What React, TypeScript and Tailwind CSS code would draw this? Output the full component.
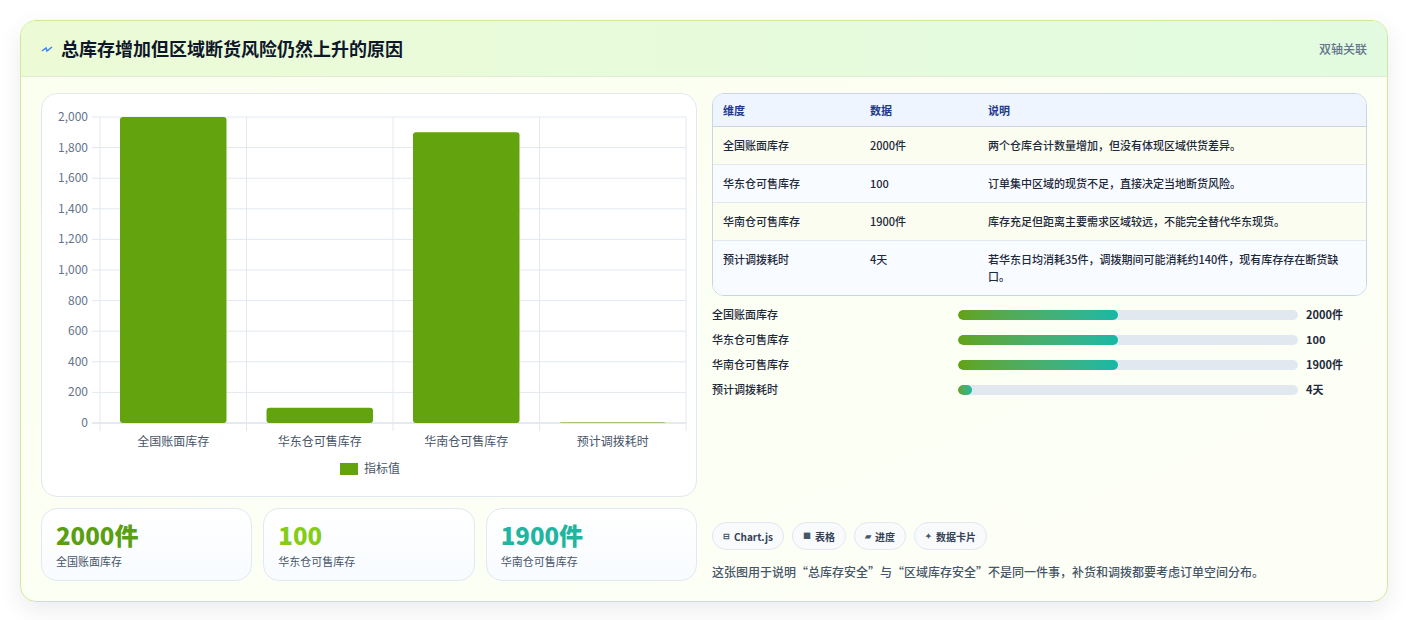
const font = { fontFamily: '"Noto Sans CJK SC", "Noto Sans", sans-serif' }

const cats = ["全国账面库存", "华东仓可售库存", "华南仓可售库存", "预计调拨耗时"]
const vals = [2000, 100, 1900, 4]

const rows = [
  ["全国账面库存", "2000件", "两个仓库合计数量增加，但没有体现区域供货差异。"],
  ["华东仓可售库存", "100", "订单集中区域的现货不足，直接决定当地断货风险。"],
  ["华南仓可售库存", "1900件", "库存充足但距离主要需求区域较远，不能完全替代华东现货。"],
  ["预计调拨耗时", "4天", "若华东日均消耗35件，调拨期间可能消耗约140件，现有库存存在断货缺口。"],
]

const bars = [
  ["全国账面库存", 47, "2000件"],
  ["华东仓可售库存", 47, "100"],
  ["华南仓可售库存", 47, "1900件"],
  ["预计调拨耗时", 4, "4天"],
] as const

function Chart() {
  const L = 58, R = 644, T = 23, B = 329
  const cw = (R - L) / 4
  const y = (v: number) => B - (v / 2000) * (B - T)
  return (
    <svg width="656" height="404" className="block">
      {[0, 200, 400, 600, 800, 1000, 1200, 1400, 1600, 1800, 2000].map((t) => (
        <g key={t}>
          <line x1={L - 8} x2={R} y1={y(t)} y2={y(t)} stroke={t === 0 ? "#cbd5e1" : "#e2e8f0"} />
          <text x={L - 12} y={y(t) + 4} textAnchor="end" fontSize="12" fill="#64748b">
            {t.toLocaleString("en-US")}
          </text>
        </g>
      ))}
      {[0, 1, 2, 3, 4].map((i) => (
        <line key={i} x1={L + i * cw} x2={L + i * cw} y1={T} y2={B + 8} stroke="#e2e8f0" />
      ))}
      {vals.map((v, i) => (
        <rect key={i} x={L + i * cw + 20} width={cw - 40} y={y(v)} height={B - y(v)} rx="3" fill="#62a30e" />
      ))}
      {cats.map((c, i) => (
        <text key={c} x={L + i * cw + cw / 2} y={352} textAnchor="middle" fontSize="12" fill="#475569">
          {c}
        </text>
      ))}
      <rect x={298} y={369} width={18} height={12} fill="#62a30e" />
      <text x={322} y={379} fontSize="12" fill="#475569">指标值</text>
    </svg>
  )
}

export default function App() {
  return (
    <div className="min-h-[620px] bg-white p-5" style={font}>
      <div className="overflow-hidden rounded-2xl border border-[#cfe99a] bg-gradient-to-br from-[#fbffef] to-[#fdfff7] shadow-[0_8px_24px_rgba(0,0,0,0.08)]">
        <div className="flex h-[56px] items-center justify-between border-b border-[#e3ecd8] bg-gradient-to-r from-[#ecfbd6] to-[#e2fbe0] px-5">
          <div className="flex items-center gap-2">
            <svg width="12" height="10" viewBox="0 0 12 10">
              <path d="M1 7 L5 4 L6 7 L11 3" fill="none" stroke="#3b82f6" strokeWidth="1.5" />
            </svg>
            <span className="text-[18px] font-bold text-[#0f172a]">总库存增加但区域断货风险仍然上升的原因</span>
          </div>
          <span className="text-[12px] font-medium text-[#64748b]">双轴关联</span>
        </div>
        <div className="flex gap-[15px] px-5 pt-4 pb-5">
          <div className="flex w-[656px] flex-col gap-[11px]">
            <div className="h-[404px] rounded-2xl border border-[#e2e8f0] bg-white">
              <Chart />
            </div>
            <div className="grid grid-cols-3 gap-[11px]">
              {[
                ["2000件", "text-[#5a9e12]", "全国账面库存"],
                ["100", "text-[#84cc16]", "华东仓可售库存"],
                ["1900件", "text-[#1fb5a0]", "华南仓可售库存"],
              ].map(([v, c, l]) => (
                <div key={l} className="h-[73px] rounded-2xl border border-[#e2e8f0] bg-gradient-to-b from-white to-[#f8fbff] px-[14px] pt-[10px]">
                  <div className={`text-[24px] leading-[32px] font-extrabold ${c}`}>{v}</div>
                  <div className="mt-[2px] text-[11px] text-[#475569]">{l}</div>
                </div>
              ))}
            </div>
          </div>
          <div className="flex flex-1 flex-col">
            <div className="overflow-hidden rounded-xl border border-[#cbd5e1] text-[11px] text-[#1e293b]">
              <div className="flex h-[33px] items-center border-b border-[#cbd5e1] bg-[#eef5ff] font-semibold text-[#1e3a8a]">
                <div className="w-[157px] pl-[10px]">维度</div>
                <div className="w-[118px]">数据</div>
                <div className="flex-1">说明</div>
              </div>
              {rows.map((r, i) => (
                <div key={r[0]} className={`flex border-b border-[#e2e8f0] py-[10px] leading-[17px] font-medium last:border-b-0 ${i % 2 ? "bg-[#f8fbff]" : "bg-[#fafdf0]"}`}>
                  <div className="w-[157px] pl-[10px]">{r[0]}</div>
                  <div className="w-[118px]">{r[1]}</div>
                  <div className="flex-1 pr-2">{r[2]}</div>
                </div>
              ))}
            </div>
            <div className="mt-[10px] flex flex-col gap-[8px]">
              {bars.map(([l, p, v]) => (
                <div key={l} className="flex h-[17px] items-center text-[11px] font-medium text-[#1e293b]">
                  <div className="w-[246px]">{l}</div>
                  <div className="h-[10px] w-[340px] overflow-hidden rounded-full bg-[#e2e8f0]">
                    <div className="h-full rounded-full bg-gradient-to-r from-[#62a30e] to-[#14b8a6]" style={{ width: `${p}%` }} />
                  </div>
                  <div className="ml-2 font-bold">{v}</div>
                </div>
              ))}
            </div>
            <div className="mt-auto flex gap-2">
              {[
                ["⊟", "Chart.js"],
                ["■", "表格"],
                ["▰", "进度"],
                ["✦", "数据卡片"],
              ].map(([i, t]) => (
                <div key={t} className="flex h-[28px] items-center gap-1 rounded-full border border-[#e2e8f0] bg-[#f8fafc] px-[10px] text-[10px] font-semibold text-[#334155]">
                  <span className="text-[8px] text-[#475569]">{i}</span>
                  {t}
                </div>
              ))}
            </div>
            <div className="mt-[13px] text-[12px] font-medium text-[#475569]">
              这张图用于说明“总库存安全”与“区域库存安全”不是同一件事，补货和调拨都要考虑订单空间分布。
            </div>
          </div>
        </div>
      </div>
    </div>
  )
}
